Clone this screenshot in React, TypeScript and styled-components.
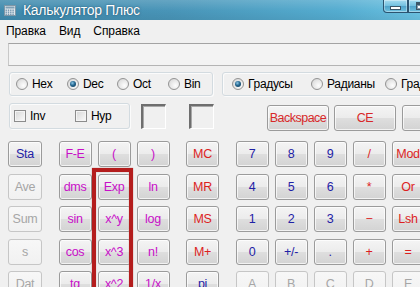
import React from 'react';
import styled, { createGlobalStyle, css } from 'styled-components';

const GlobalStyle = createGlobalStyle`
  html, body { margin: 0; padding: 0; overflow: hidden; background: #f0f0f0; }
  body { font-family: "Liberation Sans", Arial, sans-serif; }
  * { box-sizing: border-box; }
`;

const Window = styled.div`
  width: 484px;
  height: 287px;
  background: #f0f0f0;
  display: flex;
  flex-direction: column;
  overflow: hidden;
`;

const TitleBar = styled.div`
  height: 20px;
  flex: none;
  display: flex;
  align-items: center;
  padding-left: 4px;
  gap: 7px;
  background:
    linear-gradient(to bottom, rgba(255,255,255,0.16), rgba(255,255,255,0) 55%, rgba(0,0,0,0.05)),
    linear-gradient(to right, #3f8aad 0%, #4894b7 35%, #54acd0 70%, #7cd3ef 100%);
`;

const TitleText = styled.span`
  color: #fff;
  font-size: 14px;
  letter-spacing: -0.3px;
  text-shadow: 0 0 1px rgba(20, 60, 90, 0.7), 0 0 3px rgba(20, 60, 90, 0.35);
`;

const Controls = styled.div`
  margin-left: auto;
  margin-right: 6px;
  align-self: flex-start;
  display: flex;
`;

const CaptionButton = styled.div<{ $w: number; $close?: boolean }>`
  width: ${p => p.$w}px;
  height: 13px;
  border: 1px solid #2b5470;
  border-top: none;
  border-left-width: ${p => (p.$close ? 0 : 1)}px;
  border-radius: ${p => (p.$w === 25 ? '0 0 0 4px' : p.$close ? '0 0 4px 0' : '0')};
  background: ${p =>
    p.$close
      ? 'linear-gradient(#e8a593, #d0644a 50%, #c0391c 51%, #d86b4c)'
      : 'linear-gradient(#a6dcf0, #70bfdf 50%, #4ea2c9 51%, #6fc1df)'};
  display: flex;
  align-items: center;
  justify-content: center;
  box-shadow: inset 0 0 0 1px rgba(255,255,255,0.35);
`;

const MinGlyph = styled.div`
  width: 11px;
  height: 4px;
  margin-top: 3px;
  background: #fff;
  border: 1px solid #3c5668;
`;

const MaxGlyph = styled.div`
  width: 11px;
  height: 8px;
  border: 1px solid #3c5668;
  border-top-width: 3px;
  background: #fff;
  box-shadow: inset 0 0 0 1px #7f9aab;
`;

const MenuBar = styled.div`
  height: 22px;
  flex: none;
  display: flex;
  align-items: center;
  padding-left: 6px;
  gap: 13px;
  background: #f0f0f0;
`;

const MenuItem = styled.span`
  font-size: 12px;
  letter-spacing: -0.1px;
  color: #000;
`;

const Display = styled.div`
  margin: 1px 8px 0 8px;
  height: 23px;
  flex: none;
  border: 1px solid;
  border-color: #a3a3a3 #c8c8c8 #b4b4b4 #c8c8c8;
  background: #f3f3f3;
`;

const ModeRow = styled.div`
  margin-top: 6px;
  padding-left: 9px;
  display: flex;
  gap: 9px;
  flex: none;
`;

const GroupBox = styled.div<{ $w: number; $h: number; $pad: number }>`
  width: ${p => p.$w}px;
  height: ${p => p.$h}px;
  flex: none;
  padding-left: ${p => p.$pad}px;
  display: flex;
  align-items: center;
  border: 1px solid #d3dbe0;
  border-radius: 3px;
  box-shadow: inset 1px 1px 0 #fbfbfb, 1px 1px 0 #fbfbfb;
`;

const Choice = styled.label<{ $w: number }>`
  width: ${p => p.$w}px;
  flex: none;
  display: flex;
  align-items: center;
  gap: 4px;
  font-size: 12px;
  letter-spacing: -0.3px;
  color: #000;
`;

const Radio = styled.span<{ $on?: boolean }>`
  width: 12px;
  height: 12px;
  flex: none;
  border-radius: 50%;
  border: 1px solid #939393;
  background: radial-gradient(circle at 65% 65%, #fdfdfd 0%, #e6e6e6 55%, #cfcfcf 100%);
  display: flex;
  align-items: center;
  justify-content: center;
  ${p =>
    p.$on &&
    css`
      &::after {
        content: '';
        width: 6px;
        height: 6px;
        border-radius: 50%;
        background: radial-gradient(circle at 40% 35%, #8cc6e6 0%, #24668f 45%, #0f3550 100%);
      }
    `}
`;

const Check = styled.span`
  width: 12px;
  height: 12px;
  flex: none;
  border: 1px solid #8c8c8c;
  background: linear-gradient(135deg, #d6d6d6 0%, #ececec 60%, #fbfbfb 100%);
  box-shadow: inset 0 0 0 1px #f4f4f4;
`;

const ControlRow = styled.div`
  margin-top: 7px;
  padding-left: 9px;
  height: 28px;
  display: flex;
  align-items: flex-start;
  flex: none;
`;

const Sunken = styled.div<{ $before: number }>`
  width: 25px;
  height: 25px;
  margin-top: 1px;
  margin-left: ${p => p.$before}px;
  flex: none;
  border-style: solid;
  border-width: 2px 1px 1px 2px;
  border-color: #6e6e6e #ffffff #ffffff #6e6e6e;
  box-shadow: inset 1px 1px 0 #a8a8a8;
  background: #f0f0f0;
`;

const buttonFace = css`
  border: 1px solid #9b9b9b;
  border-radius: 3px;
  background: linear-gradient(#f4f4f4 0%, #ececec 48%, #dedede 52%, #d3d3d3 100%);
  box-shadow: inset 0 0 0 1px rgba(255,255,255,0.7);
  font-family: "Liberation Sans", Arial, sans-serif;
  font-size: 12.5px;
  letter-spacing: -0.3px;
  padding: 0;
  display: flex;
  align-items: center;
  justify-content: center;
`;

const EditButton = styled.button<{ $before: number }>`
  ${buttonFace};
  width: 62px;
  height: 26px;
  margin-top: 2px;
  margin-left: ${p => p.$before}px;
  flex: none;
  color: #d82828;
  letter-spacing: -0.5px;
`;

const Keypad = styled.div`
  margin-top: 10px;
  padding-left: 8px;
  display: flex;
  align-items: flex-start;
  gap: 16.5px;
`;

const KeyGroup = styled.div<{ $cols: number; $w?: number }>`
  position: relative;
  flex: none;
  display: grid;
  grid-template-columns: repeat(${p => p.$cols}, ${p => p.$w ?? 33}px);
  grid-auto-rows: 26px;
  row-gap: 6.5px;
  column-gap: 6px;
`;

type Tone = 'blue' | 'pink' | 'red' | 'off';

const toneColor: Record<Tone, string> = {
  blue: '#1f22a6',
  pink: '#c80fc8',
  red: '#dc1f1f',
  off: '#a6a6a6',
};

const Key = styled.button<{ $tone: Tone }>`
  ${buttonFace};
  color: ${p => toneColor[p.$tone]};
  ${p =>
    p.$tone === 'off' &&
    css`
      border-color: #c6c6c6;
      background: linear-gradient(#f7f7f7, #f1f1f1);
      box-shadow: none;
    `}
`;

const Highlight = styled.div`
  position: absolute;
  left: 33.5px;
  top: 27px;
  width: 41px;
  height: 140px;
  border: 4px solid #b41d1d;
  box-shadow: 0 0 1px rgba(120, 0, 0, 0.5), inset 0 0 1px rgba(120, 0, 0, 0.5);
  pointer-events: none;
`;

const CalcIcon = () => (
  <svg width="12" height="11" viewBox="0 0 12 11">
    <rect x="0.5" y="0.5" width="11" height="10" fill="#dfe7ec" stroke="#7d96a6" />
    <rect x="1.5" y="1.5" width="9" height="2" fill="#7f9fb4" />
    {[0, 1, 2, 3].map(c =>
      [0, 1, 2].map(r => (
        <rect key={`${c}-${r}`} x={1.5 + c * 2.3} y={4.6 + r * 2} width="1.4" height="1.2" fill="#5e86a2" />
      ))
    )}
  </svg>
);

type K = [string, Tone];

const groupA: K[] = [['Sta', 'blue'], ['Ave', 'off'], ['Sum', 'off'], ['s', 'off'], ['Dat', 'off']];
const groupB: K[] = [
  ['F-E', 'pink'], ['(', 'pink'], [')', 'pink'],
  ['dms', 'pink'], ['Exp', 'pink'], ['ln', 'pink'],
  ['sin', 'pink'], ['x^y', 'pink'], ['log', 'pink'],
  ['cos', 'pink'], ['x^3', 'pink'], ['n!', 'pink'],
  ['tg', 'pink'], ['x^2', 'pink'], ['1/x', 'pink'],
];
const groupC: K[] = [['MC', 'red'], ['MR', 'red'], ['MS', 'red'], ['M+', 'red'], ['pi', 'blue']];
const groupD: K[] = [
  ['7', 'blue'], ['8', 'blue'], ['9', 'blue'], ['/', 'red'], ['Mod', 'red'],
  ['4', 'blue'], ['5', 'blue'], ['6', 'blue'], ['*', 'red'], ['Or', 'red'],
  ['1', 'blue'], ['2', 'blue'], ['3', 'blue'], ['−', 'red'], ['Lsh', 'red'],
  ['0', 'blue'], ['+/-', 'blue'], ['.', 'blue'], ['+', 'red'], ['=', 'red'],
  ['A', 'off'], ['B', 'off'], ['C', 'off'], ['D', 'off'], ['E', 'off'],
];

const renderKeys = (keys: K[]) => keys.map(([label, tone], i) => (
  <Key key={i} $tone={tone}>{label}</Key>
));

export default function App() {
  return (
    <>
      <GlobalStyle />
      <Window>
        <TitleBar>
          <CalcIcon />
          <TitleText>Калькулятор Плюс</TitleText>
          <Controls>
            <CaptionButton $w={25}><MinGlyph /></CaptionButton>
            <CaptionButton $w={26}><MaxGlyph /></CaptionButton>
            <CaptionButton $w={44} $close />
          </Controls>
        </TitleBar>
        <MenuBar>
          <MenuItem>Правка</MenuItem>
          <MenuItem>Вид</MenuItem>
          <MenuItem>Справка</MenuItem>
        </MenuBar>
        <Display />
        <ModeRow>
          <GroupBox $w={204} $h={24} $pad={6}>
            <Choice $w={51}><Radio />Hex</Choice>
            <Choice $w={50}><Radio $on />Dec</Choice>
            <Choice $w={51}><Radio />Oct</Choice>
            <Choice $w={40}><Radio />Bin</Choice>
          </GroupBox>
          <GroupBox $w={250} $h={24} $pad={9}>
            <Choice $w={79}><Radio $on />Градусы</Choice>
            <Choice $w={74}><Radio />Радианы</Choice>
            <Choice $w={70}><Radio />Грады</Choice>
          </GroupBox>
        </ModeRow>
        <ControlRow>
          <GroupBox $w={121} $h={26} $pad={4}>
            <Choice $w={61}><Check />Inv</Choice>
            <Choice $w={50}><Check />Hyp</Choice>
          </GroupBox>
          <Sunken $before={11} />
          <Sunken $before={23} />
          <EditButton $before={53}>Backspace</EditButton>
          <EditButton $before={5}>CE</EditButton>
          <EditButton $before={6}>C</EditButton>
        </ControlRow>
        <Keypad>
          <KeyGroup $cols={1} $w={34}>{renderKeys(groupA)}</KeyGroup>
          <KeyGroup $cols={3}>
            {renderKeys(groupB)}
            <Highlight />
          </KeyGroup>
          <KeyGroup $cols={1}>{renderKeys(groupC)}</KeyGroup>
          <KeyGroup $cols={5}>{renderKeys(groupD)}</KeyGroup>
        </Keypad>
      </Window>
    </>
  );
}
